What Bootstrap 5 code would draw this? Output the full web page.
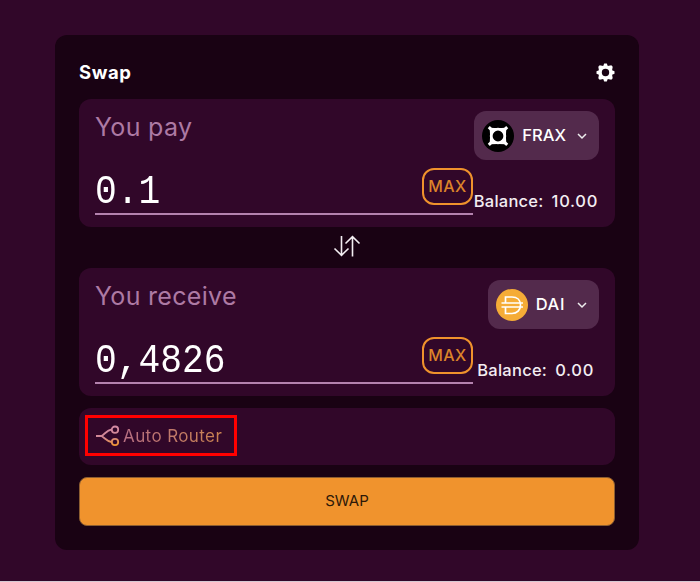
<!DOCTYPE html>
<html lang="en">
<head>
<meta charset="utf-8">
<meta name="viewport" content="width=device-width, initial-scale=1">
<title>Swap</title>
<link href="https://cdn.jsdelivr.net/npm/bootstrap@5.3.0/dist/css/bootstrap.min.css" rel="stylesheet">
<style>
body{background:#310729;color:#fff;font-family:Inter,"Open Sans",sans-serif;height:582px;overflow:hidden;padding:35px 61px 0 55px;border-bottom:1px solid #d5c9d3}
.swap-box{height:515px;border-radius:12px;background:#190213;padding:0 24px}
.head-row{height:64px;padding-top:11px}
.title{font-size:18.5px;font-weight:700;line-height:24px;letter-spacing:.6px;margin:0 0 1px}
.panel{background:#310729;border-radius:12px;height:128px;padding:12px 16px 0}
.pay-side{width:378px}
.label{font-size:25px;line-height:33px;color:#ad7aa4;letter-spacing:.3px}
.amount-row{height:47px;margin-top:24px;border-bottom:2px solid #b482ae}
.amount{display:block;font-family:"Liberation Mono",monospace;font-size:41px;line-height:49px;transform:scaleX(.885);transform-origin:left;white-space:pre}
.max{width:51px;height:37px;border:2px solid #ef922c;border-radius:12px;color:#dc8429;background:none;font-size:16px;font-weight:500;line-height:30px;padding:0 0 2px;letter-spacing:.4px}
.token-side{width:126px}
.token{height:49px;border:0;border-radius:12px;background:#532a4c;color:#fff;padding:0 8px;font-size:16.5px;font-weight:500}
.token svg{flex:none}
.token .name{margin-left:8px;margin-top:-1px}
.token .dai{letter-spacing:.6px;margin-right:1px}
.token .chev{margin-left:10px;margin-right:3px}
.balance{font-size:16.5px;font-weight:500;line-height:20px;letter-spacing:.25px;color:#f3edf2;white-space:pre;margin-top:31px;margin-right:1px}
.balance .value{margin-left:8px;letter-spacing:.7px}
.switch-row{height:41px;padding-bottom:3px}
.router{height:57px;margin-top:12px;padding:7px 6px;background:#310729;border-radius:12px}
.marked{width:152px;height:41px;border:3px solid #f00;padding-left:8px}
.router-name{font-size:17px;line-height:24px;letter-spacing:.4px;margin-left:3px;background:linear-gradient(90deg,#b76f83,#c9824f);-webkit-background-clip:text;background-clip:text;color:transparent}
.go{height:49px;margin-top:12px;border:1px solid #8b5d31;border-radius:8px;background:#f0932d;color:#2d1808;font-size:15px;padding:0}
</style>
<script src="https://cdn.jsdelivr.net/npm/bootstrap@5.3.0/dist/js/bootstrap.bundle.min.js"></script>
</head>
<body>
<main class="swap-box">
  <header class="head-row d-flex align-items-center justify-content-between">
    <h1 class="title">Swap</h1>
    <svg width="19" height="19" viewBox="-9.5 -9.5 19 19" fill="#fff" aria-label="Settings"><path fill-rule="evenodd" d="M-1.3-9H1.3L2.3-6.6 5.8-7.2 7.2-5.8 6.6-2.3 9-1.3V1.3L6.6 2.3 7.2 5.8 5.8 7.2 2.3 6.6 1.3 9H-1.3L-2.3 6.6-5.8 7.2-7.2 5.8-6.6 2.3-9 1.3V-1.3L-6.6-2.3-7.2-5.8-5.8-7.2-2.3-6.6ZM0-3.7A3.7 3.7 0 1 0 0 3.7 3.7 3.7 0 1 0 0-3.7Z"/></svg>
  </header>

  <section class="panel d-flex">
    <div class="pay-side">
      <div class="label">You pay</div>
      <div class="amount-row d-flex justify-content-between align-items-start"><span class="amount">0.1</span><button class="max">MAX</button></div>
    </div>
    <div class="token-side d-flex flex-column align-items-end">
      <button class="token d-flex align-items-center">
        <svg width="32" height="32" viewBox="0 0 32 32"><circle cx="16" cy="16" r="16"/><g fill="none" stroke="#fff"><circle cx="16" cy="16" r="6.8" stroke-width="2.8"/><path stroke-width="2" d="M8.5 8.7Q16 9.5 23.5 8.7M8.500 23.3Q16 22.5 23.5 23.3M8.7 8.5Q9.5 16 8.7 23.5M23.3 8.5Q22.5 16 23.3 23.5"/><path stroke-width="3" d="M6.8 7.2l4.2 4M25.2 7.2l-4.2 4M6.800 24.8l4.2-4M25.2 24.8l-4.2-4"/></g></svg>
        <span class="name">FRAX</span>
        <svg class="chev" width="12" height="12" viewBox="0 0 12 12" fill="none" stroke="#eee" stroke-width="1.5"><path d="M2 4l4 4 4-4"/></svg>
      </button>
      <div class="balance">Balance:<span class="value">10.00</span></div>
    </div>
  </section>

  <div class="switch-row d-flex align-items-center justify-content-center">
    <svg width="28" height="24" viewBox="0 0 28 24" fill="none" stroke="#f3eef2" stroke-width="1.6"><path d="M8.500 2V21M1.500 14.500L8.500 21.300 15.500 14.500M19.500 22.500V3M12.500 9.500L19.500 2.700 26.500 9.500"/></svg>
  </div>

  <section class="panel d-flex">
    <div class="pay-side">
      <div class="label">You receive</div>
      <div class="amount-row d-flex justify-content-between align-items-start"><span class="amount">0,4826</span><button class="max">MAX</button></div>
    </div>
    <div class="token-side d-flex flex-column align-items-end">
      <button class="token d-flex align-items-center">
        <svg width="32" height="32" viewBox="0 0 32 32"><circle cx="16" cy="16" r="16" fill="#f5ac37"/><path d="M9.500 14V8H16c5 0 8.500 3 8.500 8s-3.500 8.500-8.500 8.500H9.500V18M5.500 14H27M5.500 18H27" fill="none" stroke="#fff" stroke-width="1.7"/></svg>
        <span class="name dai">DAI</span>
        <svg class="chev" width="12" height="12" viewBox="0 0 12 12" fill="none" stroke="#eee" stroke-width="1.5"><path d="M2 4l4 4 4-4"/></svg>
      </button>
      <div class="balance pe-1">Balance:<span class="value">0.00</span></div>
    </div>
  </section>

  <section class="router">
    <div class="marked d-flex align-items-center">
      <svg width="24" height="22" viewBox="0 0 24 22" fill="none" stroke="url(#route)" stroke-width="1.8"><defs><linearGradient id="route" gradientUnits="userSpaceOnUse" x1="12" y1="2" x2="15" y2="21"><stop stop-color="#d48aa4"/><stop offset=".5" stop-color="#d08793"/><stop offset="1" stop-color="#ee9432"/></linearGradient></defs><path d="M0 11H5.500C9 9 11 5 15.500 4.500M5.500 11C9 13 11 16.500 15.500 17"/><circle cx="19" cy="4.700" r="3.200"/><circle cx="19" cy="17" r="3.200"/></svg>
      <span class="router-name">Auto Router</span>
    </div>
  </section>
  <button class="go btn w-100 d-block">SWAP</button>
</main>
</body>
</html>
